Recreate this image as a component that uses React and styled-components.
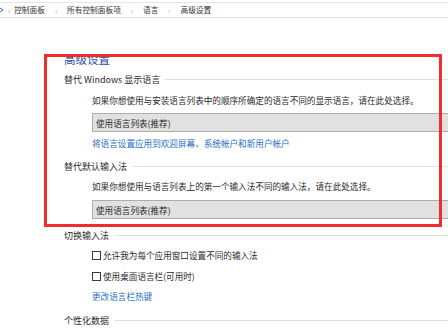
import React from 'react';
import styled, { createGlobalStyle } from 'styled-components';

const GlobalStyle = createGlobalStyle`
  html, body {
    margin: 0;
    padding: 0;
    background: #ffffff;
  }
  body {
    font-family: "Noto Sans CJK SC", "Noto Sans", sans-serif;
    color: #2b2b2b;
  }
`;

const Page = styled.div`
  position: relative;
  width: 448px;
  height: 329px;
  overflow: hidden;
  background: #fff;
`;

const AddressBar = styled.div`
  margin-top: 2px;
  height: 14px;
  border-top: 1px solid #e6e6e6;
  border-bottom: 1px solid #e2e2e2;
  display: flex;
  align-items: center;
  font-size: 7.7px;
  color: #333;
  white-space: nowrap;
`;

const Crumb = styled.span`
  line-height: 14px;
`;

const Sep = styled.span`
  color: #999;
  font-size: 7px;
  margin: 0 ${(p) => p.$gap || 10}px;
`;

const Content = styled.div`
  padding-left: 64px;
  display: flex;
  flex-direction: column;
`;

const Title = styled.div`
  margin-top: 33px;
  height: 16px;
  line-height: 16px;
  font-size: 11.5px;
  color: #2c4ea3;
`;

const SectionHeader = styled.div`
  display: flex;
  align-items: center;
  height: ${(p) => p.$h}px;
  margin-top: ${(p) => p.$mt || 0}px;
  margin-right: -20px;
  font-size: 9px;
  color: #2b2b2b;
  white-space: nowrap;

  &::after {
    content: '';
    flex: 1;
    height: 1px;
    margin-left: 5px;
    background: #e0e0e0;
  }
`;

const Indented = styled.div`
  margin-left: 28px;
  display: flex;
  align-items: center;
  height: ${(p) => p.$h}px;
  margin-top: ${(p) => p.$mt || 0}px;
  font-size: 8.6px;
  white-space: nowrap;
`;

const Link = styled(Indented)`
  color: #1f6fc7;
`;

const Select = styled.div`
  margin-left: 28px;
  margin-right: -20px;
  margin-top: ${(p) => p.$mt || 0}px;
  height: 17px;
  border: 1px solid #adadad;
  background: #e1e1e1;
  display: flex;
  align-items: center;
  padding-left: 3px;
  font-size: 8.6px;
  color: #2b2b2b;
`;

const Box = styled.span`
  width: 7px;
  height: 7px;
  border: 1px solid #3a3a3a;
  background: #fff;
  margin-right: 2px;
  flex-shrink: 0;
`;

const Highlight = styled.div`
  position: absolute;
  left: 44px;
  top: 54px;
  width: 392px;
  height: 167px;
  border: 3px solid #ee2e2e;
  pointer-events: none;
`;

const BackIcon = () => (
  <svg width="4" height="14" viewBox="0 0 4 14">
    <path d="M0 5 L3 7 L0 9" fill="none" stroke="#3b6fb6" strokeWidth="1" />
  </svg>
);

export default function App() {
  return (
    <Page>
      <GlobalStyle />
      <AddressBar>
        <BackIcon />
        <Sep $gap={4}>›</Sep>
        <Crumb>控制面板</Crumb>
        <Sep>›</Sep>
        <Crumb>所有控制面板项</Crumb>
        <Sep>›</Sep>
        <Crumb>语言</Crumb>
        <Sep>›</Sep>
        <Crumb>高级设置</Crumb>
      </AddressBar>
      <Content>
        <Title>高级设置</Title>
        <SectionHeader $h={22} $mt={1}>替代 Windows 显示语言</SectionHeader>
        <Indented $h={20}>如果你想使用与安装语言列表中的顺序所确定的语言不同的显示语言，请在此处选择。</Indented>
        <Select $mt={3}>使用语言列表(推荐)</Select>
        <Link $h={22}>将语言设置应用到欢迎屏幕、系统帐户和新用户帐户</Link>
        <SectionHeader $h={24}>替代默认输入法</SectionHeader>
        <Indented $h={16}>如果你想使用与语言列表上的第一个输入法不同的输入法，请在此处选择。</Indented>
        <Select $mt={6}>使用语言列表(推荐)</Select>
        <SectionHeader $h={19} $mt={7}>切换输入法</SectionHeader>
        <Indented $h={20}>
          <Box />
          允许我为每个应用窗口设置不同的输入法
        </Indented>
        <Indented $h={22}>
          <Box />
          使用桌面语言栏(可用时)
        </Indented>
        <Link $h={18}>更改语言栏热键</Link>
        <SectionHeader $h={30}>个性化数据</SectionHeader>
      </Content>
      <Highlight />
    </Page>
  );
}
